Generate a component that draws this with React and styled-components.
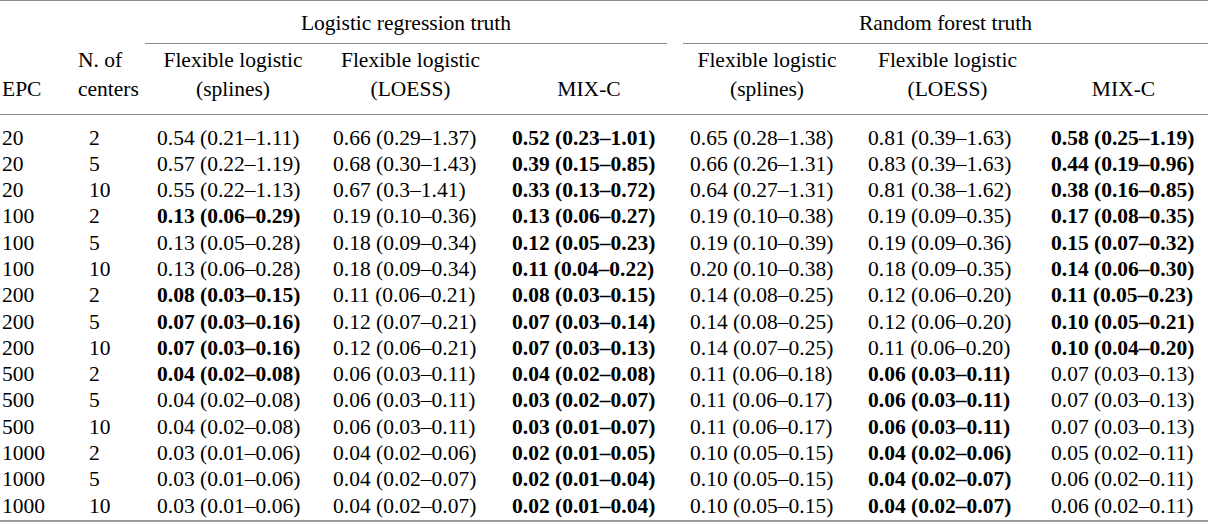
import React from 'react';
import styled, { createGlobalStyle } from 'styled-components';

const GlobalStyle = createGlobalStyle`
  html, body {
    margin: 0;
    padding: 0;
    background: #ffffff;
  }
  body {
    font-family: "Liberation Serif", "Times New Roman", serif;
    color: #000;
  }
`;

const columns = '66px 79px 176px 179px 178px 178px 183px 169px';

const Table = styled.div`
  width: 1208px;
  font-family: "Liberation Serif", "Times New Roman", serif;
  font-size: 21.5px;
  color: #000;
`;

const Head = styled.div`
  display: grid;
  grid-template-columns: ${columns};
  border-top: 1px solid #8a8a8a;
  border-bottom: 1px solid #8a8a8a;
`;

const GroupCell = styled.div`
  grid-column: ${(p) => p.$start} / span 3;
  text-align: center;
  line-height: 26px;
  padding: 8.5px 0 7.5px;
  border-bottom: 1px solid #8a8a8a;
  margin: 0 ${(p) => p.$right}px 0 ${(p) => p.$left}px;
`;

const Spacer = styled.div`
  grid-column: 1 / span 2;
`;

const HeadCell = styled.div`
  align-self: end;
  line-height: 29px;
  padding: 1.5px 0 10.5px ${(p) => p.$pad || 0}px;
  text-align: ${(p) => p.$align || 'center'};
  white-space: nowrap;
`;

const Body = styled.div`
  padding: 9.5px 0 1.5px;
  border-bottom: 2px solid #9c9c9c;
`;

const Row = styled.div`
  display: grid;
  grid-template-columns: ${columns};
  line-height: 26.3px;
`;

const Cell = styled.div`
  padding-left: ${(p) => p.$pad}px;
  font-weight: ${(p) => (p.$bold ? 700 : 400)};
  white-space: nowrap;
`;

// "*" marks the best value of its row
const rows = [
  ['20', '2', '0.54 (0.21–1.11)', '0.66 (0.29–1.37)', '*0.52 (0.23–1.01)', '0.65 (0.28–1.38)', '0.81 (0.39–1.63)', '*0.58 (0.25–1.19)'],
  ['20', '5', '0.57 (0.22–1.19)', '0.68 (0.30–1.43)', '*0.39 (0.15–0.85)', '0.66 (0.26–1.31)', '0.83 (0.39–1.63)', '*0.44 (0.19–0.96)'],
  ['20', '10', '0.55 (0.22–1.13)', '0.67 (0.3–1.41)', '*0.33 (0.13–0.72)', '0.64 (0.27–1.31)', '0.81 (0.38–1.62)', '*0.38 (0.16–0.85)'],
  ['100', '2', '*0.13 (0.06–0.29)', '0.19 (0.10–0.36)', '*0.13 (0.06–0.27)', '0.19 (0.10–0.38)', '0.19 (0.09–0.35)', '*0.17 (0.08–0.35)'],
  ['100', '5', '0.13 (0.05–0.28)', '0.18 (0.09–0.34)', '*0.12 (0.05–0.23)', '0.19 (0.10–0.39)', '0.19 (0.09–0.36)', '*0.15 (0.07–0.32)'],
  ['100', '10', '0.13 (0.06–0.28)', '0.18 (0.09–0.34)', '*0.11 (0.04–0.22)', '0.20 (0.10–0.38)', '0.18 (0.09–0.35)', '*0.14 (0.06–0.30)'],
  ['200', '2', '*0.08 (0.03–0.15)', '0.11 (0.06–0.21)', '*0.08 (0.03–0.15)', '0.14 (0.08–0.25)', '0.12 (0.06–0.20)', '*0.11 (0.05–0.23)'],
  ['200', '5', '*0.07 (0.03–0.16)', '0.12 (0.07–0.21)', '*0.07 (0.03–0.14)', '0.14 (0.08–0.25)', '0.12 (0.06–0.20)', '*0.10 (0.05–0.21)'],
  ['200', '10', '*0.07 (0.03–0.16)', '0.12 (0.06–0.21)', '*0.07 (0.03–0.13)', '0.14 (0.07–0.25)', '0.11 (0.06–0.20)', '*0.10 (0.04–0.20)'],
  ['500', '2', '*0.04 (0.02–0.08)', '0.06 (0.03–0.11)', '*0.04 (0.02–0.08)', '0.11 (0.06–0.18)', '*0.06 (0.03–0.11)', '0.07 (0.03–0.13)'],
  ['500', '5', '0.04 (0.02–0.08)', '0.06 (0.03–0.11)', '*0.03 (0.02–0.07)', '0.11 (0.06–0.17)', '*0.06 (0.03–0.11)', '0.07 (0.03–0.13)'],
  ['500', '10', '0.04 (0.02–0.08)', '0.06 (0.03–0.11)', '*0.03 (0.01–0.07)', '0.11 (0.06–0.17)', '*0.06 (0.03–0.11)', '0.07 (0.03–0.13)'],
  ['1000', '2', '0.03 (0.01–0.06)', '0.04 (0.02–0.06)', '*0.02 (0.01–0.05)', '0.10 (0.05–0.15)', '*0.04 (0.02–0.06)', '0.05 (0.02–0.11)'],
  ['1000', '5', '0.03 (0.01–0.06)', '0.04 (0.02–0.07)', '*0.02 (0.01–0.04)', '0.10 (0.05–0.15)', '*0.04 (0.02–0.07)', '0.06 (0.02–0.11)'],
  ['1000', '10', '0.03 (0.01–0.06)', '0.04 (0.02–0.07)', '*0.02 (0.01–0.04)', '0.10 (0.05–0.15)', '*0.04 (0.02–0.07)', '0.06 (0.02–0.11)'],
];

const padFor = (i) => (i === 0 ? 2 : i === 1 ? 23 : 12);

const models = [
  ['Flexible logistic', '(splines)'],
  ['Flexible logistic', '(LOESS)'],
  [null, 'MIX-C'],
];

export default function App() {
  return (
    <>
      <GlobalStyle />
      <Table>
        <Head>
          <Spacer />
          <GroupCell $start={3} $left={0} $right={11}>
            Logistic regression truth
          </GroupCell>
          <GroupCell $start={6} $left={5} $right={0}>
            Random forest truth
          </GroupCell>
          <HeadCell $align="left" $pad={2}>
            EPC
          </HeadCell>
          <HeadCell $align="left" $pad={12}>
            N. of
            <br />
            centers
          </HeadCell>
          {[...models, ...models].map((m, i) => (
            <HeadCell key={`head-${i}`}>
              {m[0] && (
                <>
                  {m[0]}
                  <br />
                </>
              )}
              {m[1]}
            </HeadCell>
          ))}
        </Head>
        <Body>
          {rows.map((r, ri) => (
            <Row key={`row-${ri}`}>
              {r.map((v, ci) => {
                const bold = v.startsWith('*');
                return (
                  <Cell key={`cell-${ri}-${ci}`} $pad={padFor(ci)} $bold={bold}>
                    {bold ? v.slice(1) : v}
                  </Cell>
                );
              })}
            </Row>
          ))}
        </Body>
      </Table>
    </>
  );
}
